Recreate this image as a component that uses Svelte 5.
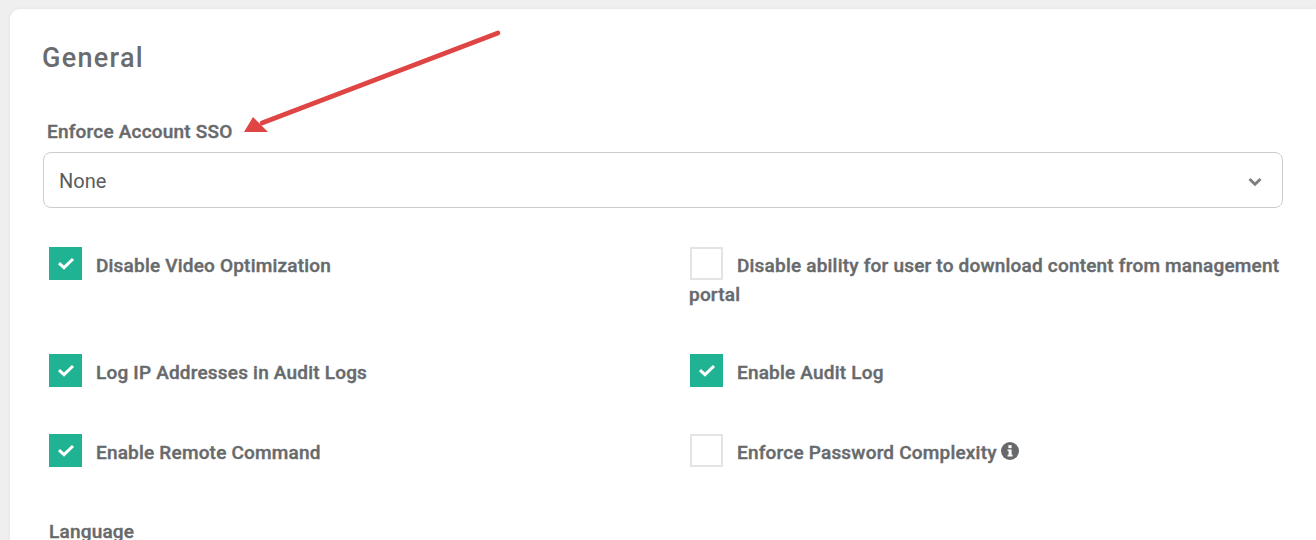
<script>
  const options = [
    { label: "Disable Video Optimization", checked: true },
    { label: "Disable ability for user to download content from management portal", checked: false },
    { label: "Log IP Addresses in Audit Logs", checked: true },
    { label: "Enable Audit Log", checked: true },
    { label: "Enable Remote Command", checked: true },
    { label: "Enforce Password Complexity", checked: false, info: true },
  ];
</script>

<div class="page">
  <section class="card">
    <h2>General</h2>

    <div class="field">
      <span class="label sso">Enforce Account SSO</span>
      <div class="select">
        <span class="value">None</span>
        <svg class="chevron" width="14" height="10" viewBox="0 0 14 10">
          <path d="M1.5 2 7 7.2 12.5 2" fill="none" stroke="#7d7d7d" stroke-width="2.8" />
        </svg>
      </div>
    </div>

    <div class="options">
      {#each options as opt}
        <div class="option">
          <span class="box" class:checked={opt.checked}>
            {#if opt.checked}
              <svg width="18" height="13" viewBox="0 0 18 13">
                <path d="M2 6.2 7 10.6 16 2" fill="none" stroke="#fff" stroke-width="3" />
              </svg>
            {/if}
          </span>
          <span class="label">{opt.label}</span>
          {#if opt.info}
            <svg class="info" width="18" height="18" viewBox="0 0 17 17">
              <circle cx="8.5" cy="8.5" r="8.5" fill="#676a6c" />
              <rect x="7" y="3" width="3" height="2.8" fill="#fff" />
              <path d="M6.2 7h3.8v5h1v1.6H6.2V12h1V8.6h-1z" fill="#fff" />
            </svg>
          {/if}
        </div>
      {/each}
    </div>

    <span class="label language">Language</span>
  </section>

  <svg class="arrow" width="270" height="115" viewBox="0 0 270 115">
    <path d="M258 7 22 97" stroke="#e04545" stroke-width="4.6" stroke-linecap="round" />
    <path d="M4 106 13 91 28 106z" fill="#e04545" />
  </svg>
</div>

<style>
  :global(body) {
    margin: 0;
    background: #efefef;
    overflow: hidden;
  }

  .page {
    position: relative;
    height: 540px;
    padding: 9px 0 0 10px;
    box-sizing: border-box;
    overflow: hidden;
    font-family: Roboto, sans-serif;
    color: #676a6c;
  }

  .card {
    height: 600px;
    background: #fff;
    border-radius: 10px 0 0 0;
    padding: 31px 33px 0 33px;
    box-sizing: border-box;
    box-shadow: 0 0 4px rgba(0, 0, 0, 0.05);
  }

  h2 {
    margin: 0 0 0 -1px;
    font-size: 27px;
    line-height: 36px;
    font-weight: 500;
    letter-spacing: 1.3px;
    color: #6a6b6d;
  }

  .field {
    margin-top: 42px;
  }

  .label {
    font-size: 19px;
    font-weight: 500;
    letter-spacing: 0.2px;
    line-height: 28px;
    -webkit-text-stroke: 0.4px #676a6c;
  }

  .sso {
    display: block;
    margin-left: 4px;
    margin-bottom: 6px;
  }

  .select {
    display: flex;
    align-items: center;
    justify-content: space-between;
    width: 1240px;
    height: 56px;
    box-sizing: border-box;
    border: 1px solid #cccccc;
    border-radius: 8px;
    padding: 0 20px 0 15px;
    font-size: 20px;
    color: #5a5c5e;
  }

  .value {
    padding-top: 2px;
  }

  .chevron {
    position: relative;
    top: 2px;
  }

  .options {
    display: grid;
    grid-template-columns: 641px 595px;
    grid-template-rows: 107px 80px 80px;
    margin-top: 39px;
    padding-left: 5px;
  }

  .option {
    line-height: 28px;
  }

  .box {
    display: inline-flex;
    align-items: center;
    justify-content: center;
    vertical-align: top;
    width: 33px;
    height: 33px;
    box-sizing: border-box;
    border: 2px solid #e4e4e4;
    margin: 0 10px -5px 1px;
  }

  .box.checked {
    background: #1fb394;
    border: none;
  }

  .option .label {
    position: relative;
    top: 5px;
  }

  .info {
    vertical-align: -2px;
    position: relative;
    top: 4px;
  }

  .language {
    display: block;
    margin-left: 6px;
    position: relative;
    top: 4px;
  }

  .arrow {
    position: absolute;
    left: 240px;
    top: 26px;
  }
</style>
